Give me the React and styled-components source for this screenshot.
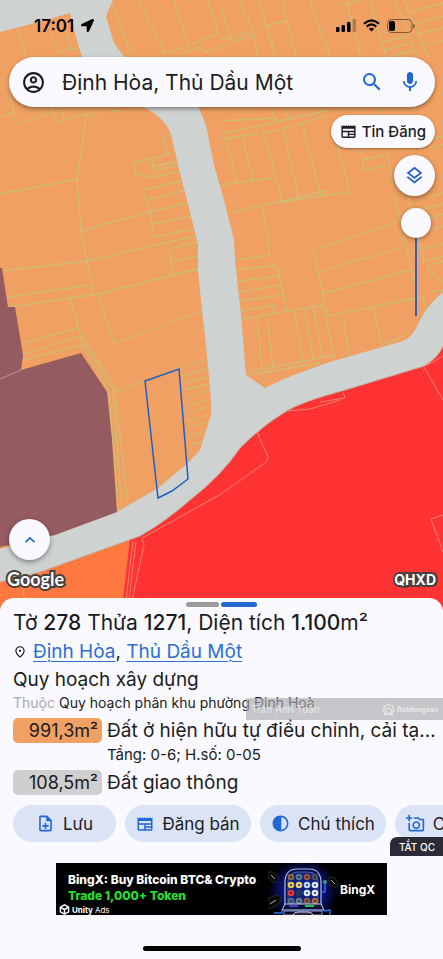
import React, { useState } from 'react';
import styled, { createGlobalStyle } from 'styled-components';
import { FaLocationArrow } from 'react-icons/fa';
import {
  MdContrast,
  MdKeyboardArrowUp,
  MdMic,
  MdOutlineAccountCircle,
  MdOutlineAddAPhoto,
  MdOutlineLayers,
  MdOutlineNewspaper,
  MdOutlineNoteAdd,
  MdOutlinePlace,
  MdSearch,
} from 'react-icons/md';

const GlobalStyle = createGlobalStyle`
  * {
    box-sizing: border-box;
  }
  body {
    margin: 0;
    background: #faf9ff;
    color: #1b1c22;
    font-family: Inter, 'Noto Sans', sans-serif;
  }
  button, input {
    font-family: inherit;
    color: inherit;
  }
`;

const Page = styled.div`
  display: flex;
  flex-direction: column;
  min-height: 100vh;
  overflow: hidden;
`;

const MapArea = styled.section`
  position: relative;
  display: flex;
  flex-direction: column;
  flex: 1;
  min-height: 560px;
  padding-bottom: 20px;
  background: #f0a062;
`;

const MapSvg = styled.svg`
  position: absolute;
  inset: 0;
  width: 100%;
  height: 100%;
`;

const StatusBar = styled.div`
  position: relative;
  display: flex;
  align-items: center;
  justify-content: space-between;
  height: 57px;
  padding: 0 28px 6px 34px;
  color: #000;
`;

const Clock = styled.div`
  display: flex;
  align-items: center;
  gap: 7px;
  font-size: 17px;
  font-weight: 600;
`;

const StatusIcons = styled.div`
  display: flex;
  align-items: center;
  gap: 7px;
`;

const SearchBar = styled.form`
  position: relative;
  display: flex;
  align-items: center;
  height: 50px;
  margin: 0 8px 0 9px;
  padding: 0 6px 0 11px;
  border-radius: 25px;
  background: #faf9ff;
  box-shadow: 0 2px 4px rgba(0, 0, 0, 0.4);
`;

const SearchInput = styled.input`
  flex: 1;
  min-width: 0;
  padding: 0 0 0 16px;
  border: 0;
  outline: 0;
  background: transparent;
  font-size: 21px;
`;

const IconButton = styled.button`
  display: flex;
  align-items: center;
  justify-content: center;
  width: ${({ $wide }) => ($wide ? '38px' : '26px')};
  height: 38px;
  padding: 0;
  border: 0;
  background: transparent;
  color: ${({ $blue }) => ($blue ? '#1f66d6' : '#1b1c22')};
`;

const MapTools = styled.div`
  position: relative;
  display: flex;
  flex-direction: column;
  align-items: flex-end;
  gap: 7px;
  padding: 8px 8px 0 0;
`;

const PostButton = styled.button`
  display: flex;
  align-items: center;
  gap: 5px;
  height: 33px;
  padding: 0 9px;
  border: 0;
  border-radius: 17px;
  background: #faf9ff;
  box-shadow: 0 1px 3px rgba(0, 0, 0, 0.4);
  font-size: 15px;
  font-weight: 500;
`;

const RoundButton = styled.button`
  display: flex;
  align-items: center;
  justify-content: center;
  width: 41px;
  height: 41px;
  padding: 0;
  border: 0;
  border-radius: 50%;
  background: #faf9ff;
  color: #1f5fc4;
  box-shadow: 0 2px 5px rgba(0, 0, 0, 0.4);
`;

const OpacitySlider = styled.input`
  appearance: none;
  writing-mode: vertical-lr;
  width: 30px;
  height: 108px;
  margin: 5px 4px 0 0;
  background: linear-gradient(#2f62bd, #2f62bd) center / 2px 100% no-repeat;

  &::-webkit-slider-thumb {
    appearance: none;
    width: 30px;
    height: 30px;
    border-radius: 50%;
    background: #faf9ff;
    box-shadow: 0 1px 4px rgba(0, 0, 0, 0.45);
  }
`;

const MapFooter = styled.div`
  position: relative;
  display: flex;
  flex-direction: column;
  gap: 8px;
  margin-top: auto;
  padding: 0 7px;
`;

const FooterRow = styled.div`
  display: flex;
  align-items: center;
  justify-content: space-between;
  height: 22px;
  color: #fff;
  paint-order: stroke fill;
  -webkit-text-stroke: 4px #45403e;
`;

const GoogleMark = styled.span`
  font-family: Lato, sans-serif;
  font-size: 18px;
  font-weight: 700;
`;

const MapMode = styled.span`
  font-size: 14px;
  font-weight: 700;
`;

const CollapseButton = styled(RoundButton)`
  margin-left: 2px;
`;

const Sheet = styled.main`
  position: relative;
  margin-top: -12px;
  padding-top: 4px;
  border-radius: 14px 14px 0 0;
  background: #faf9ff;
`;

const Handles = styled.div`
  display: flex;
  justify-content: center;
  gap: 2px;
  height: 7px;
`;

const Handle = styled.span`
  width: ${({ $active }) => ($active ? '36px' : '33px')};
  height: 5px;
  border-radius: 3px;
  background: ${({ $active }) => ($active ? '#2469cf' : '#9b9b9b')};
`;

const Info = styled.div`
  display: flex;
  flex-direction: column;
  padding: 0 0 0 13px;
`;

const Title = styled.h1`
  margin: 0;
  font-size: 21px;
  font-weight: 400;
  line-height: 28px;
  white-space: nowrap;

  b {
    font-weight: 500;
  }
`;

const Place = styled.p`
  display: flex;
  align-items: center;
  gap: 6px;
  margin: 0;
  font-size: 19px;
  line-height: 30px;

  a {
    color: #2b70d2;
    text-decoration-thickness: 1px;
    text-underline-offset: 3px;
  }
`;

const Heading = styled.h2`
  margin: 0;
  font-size: 19px;
  font-weight: 400;
  line-height: 26px;
`;

const Zoning = styled.p`
  margin: 0 0 5px;
  font-size: 14px;
  line-height: 20px;

  span {
    color: #a9a9b0;
  }
`;

const LandRow = styled.div`
  display: flex;
  align-items: center;
  gap: 5px;
  height: 25px;
  padding-right: 7px;
`;

const Area = styled.span`
  flex: none;
  width: 89px;
  padding-right: 4px;
  border-radius: 5px;
  background: ${({ $color }) => $color};
  font-size: 18px;
  line-height: 25px;
  text-align: right;
`;

const LandName = styled.span`
  overflow: hidden;
  font-size: 19px;
  line-height: 28px;
  text-overflow: ellipsis;
  white-space: nowrap;
`;

const LandNote = styled.p`
  margin: 0 0 3px 94px;
  font-size: 15px;
  line-height: 24px;
`;

const Chips = styled.div`
  display: flex;
  gap: 9px;
  margin-top: 10px;
  overflow: hidden;
`;

const Chip = styled.button`
  display: flex;
  flex: none;
  align-items: center;
  justify-content: center;
  gap: 8px;
  width: ${({ $small }) => ($small ? '103px' : '126px')};
  height: 37px;
  padding: 0;
  border: 0;
  border-radius: 19px;
  background: #dbe4f7;
  font-size: 17px;

  svg {
    color: #1f66d6;
  }
`;

const Watermark = styled.div`
  position: absolute;
  top: 100px;
  right: 0;
  display: flex;
  align-items: center;
  justify-content: space-between;
  width: 197px;
  height: 22px;
  padding: 0 5px;
  background: rgba(170, 170, 174, 0.65);
  color: #e8e8ea;
  font-size: 10px;
`;

const WatermarkBrand = styled.span`
  display: flex;
  align-items: center;
  gap: 2px;
  font-size: 7px;
  font-weight: 700;
`;

const AdBlock = styled.aside`
  position: relative;
  display: flex;
  justify-content: center;
  padding-top: 21px;
`;

const CloseAd = styled.button`
  position: absolute;
  top: -5px;
  right: 0;
  height: 19px;
  padding: 0 8px 0 9px;
  border: 0;
  border-radius: 7px 0 0 0;
  background: #2a2b34;
  color: #fff;
  font-size: 10px;
  font-weight: 500;
`;

const Ad = styled.a`
  display: flex;
  width: 331px;
  height: 52px;
  overflow: hidden;
  background: #000;
  color: #fff;
  text-decoration: none;
`;

const AdText = styled.div`
  display: flex;
  flex: none;
  flex-direction: column;
  width: 212px;
  padding: 9px 0 0 12px;
  font-size: 12px;
  font-weight: 800;
  line-height: 16px;
  white-space: nowrap;
`;

const AdGreen = styled.span`
  color: #22e02a;
`;

const AdNetwork = styled.span`
  display: flex;
  align-items: center;
  gap: 2px;
  margin-left: -9px;
  font-size: 8px;
  font-weight: 700;
  line-height: 8px;

  i {
    font-style: normal;
    font-weight: 400;
  }
`;

const AdArt = styled.svg`
  flex: none;
  width: 72px;
  height: 52px;
`;

const AdBrand = styled.span`
  align-self: center;
  font-size: 12px;
  font-weight: 700;
`;

const HomeIndicator = styled.div`
  width: 158px;
  height: 5px;
  margin: 31px auto 8px;
  border-radius: 3px;
  background: #000;
`;

// parcel borders on residential land
const parcels = [
  'M17 27 26 57M51 34 52 42 58 47 58 52 77 48M67 32 71 49M0 117 12 112 16 124 44 115 42 108M51 108 57 123 88 113M60 108 65 120M92 116 97 112 100 108M111 108 112 111 123 110',
  'M87 112 77 178 81 231 94 295M0 194 78 179M7 80 14 114M112 5 132 55M139 0 165 53M174 0 188 44M207 0 219 34M165 54 219 34M180 54 200 47 206 52 221 47',
  'M172 135 163 137 168 154M173 163 153 166 155 177M133 163 173 153M152 160 153 167 178 161M155 170 180 165M155 177 180 171M143 190 183 181M143 190 146 200 187 190M133 163 137 175 155 177',
  'M0 271 87 261M81 231 148 212 187 203M148 200 155 237 193 229M152 224 191 216M87 261 195 236M169 249 198 242M169 249 173 275 198 269M171 262 198 256M94 295 198 269M8 297 90 285M8 307 98 294',
  'M70 298 82 340 115 392 128 505M23 343 78 328M23 354 80 336M23 360 82 345M82 336 117 390M80 341 109 392 118 511M98 295 114 343 203 311M113 392 122 508M115 392 145 381',
  'M180 368 205 360M182 376 207 369M184 383 208 377M184 390 209 384M185 398 210 390M185 407 211 399M186 414 211 406M187 421 211 414M187 428 210 421M188 436 208 430M189 445 204 441',
  'M229 213 330 190M263 208 270 255 236 260M236 270 277 265 287 310M238 281 279 276M239 292 281 285M240 301 283 295M240 311 274 305 275 313M242 319 322 305 335 358M257 317 262 368M267 316 273 368M294 311 303 361M304 308 314 360M313 306 323 357M247 372 335 355M248 375 320 363',
  'M397 222 313 250 328 316 422 297 427 310M318 272 403 247M321 294 410 270M343 316 349 356M373 308 382 345 408 334M394 196 417 290M408 196 424 262 443 256M421 250 443 243M427 266 443 261M443 283 434 276 427 266M431 292 443 290',
  'M221 8 232 41M240 0 254 34 258 57M221 46 254 34M221 40 252 31M258 0 276 57M265 26 286 21M282 0 296 57M310 0 330 57M342 5 362 0M346 0 361 57M370 0 386 57M395 0 418 57M404 0 428 57M381 34 402 28M383 42 406 36M384 50 411 43M387 57 414 50M411 12 443 3M415 24 443 16M418 34 443 28M424 46 443 40',
  'M221 121 277 118M221 139 275 131 330 115M221 134 330 110M271 108 276 122M285 108 290 120M226 138 237 183M221 185 272 178M242 135 253 180M263 130 282 200M283 127 299 200M302 124 321 196 350 192 331 120M277 203 321 196M360 148 364 170 386 165M362 160 386 155M380 108 388 156 393 185M434 138 443 136M410 108 420 105M430 148 443 144M432 196 443 193M412 212 443 204M414 222 443 214M417 234 443 226',
];

const sensitive =
  'M257 432 268 457 266 462 221 494 142 538 144 545 132 600M133 541 126 600M136 541 129 600M288 411 310 409 340 400M443 515 431 519 443 552M424 367 443 400M343 392 345 398 320 402M426 366 443 356';

function PlanningMap() {
  return (
    <MapSvg viewBox="0 0 443 618" preserveAspectRatio="xMidYMin slice" aria-hidden="true">
      <rect width="443" height="618" fill="#f0a062" />
      <path d={parcels.join('')} fill="none" stroke="#cfbd72" strokeWidth="1.3" />
      {/* red zone and bright orange zone under the road */}
      <path d="M443 335 424 356 345 380 285 398 250 420 205 470 165 510 128 541 120 618 443 618Z" fill="#ff3333" />
      <path d="M0 575 60 560 130 538 121 618 0 618Z" fill="#ff7840" />
      <path d={sensitive} fill="none" stroke="#f08468" strokeWidth="1" />
      <path d="M22 587 25 600" stroke="#f0a062" />
      {/* roads */}
      <path
        d="M0 0H113L106 16 113 40Q118 52 140 72L182 90Q200 102 207 130L214 165 224 200 234 240 235 260 241 315 246 375 265 388Q288 376 330 362L403 341Q413 337 418 324 426 306 443 292V346Q438 358 424 366L345 390Q300 402 285 412 262 426 240 448 222 475 190 500 165 522 140 536L90 554 40 572 0 582V549L55 535 117 512 158 488 188 463 200 450 211 415V400L206 345 202 310 198 270V245L187 200 178 165 171 134Q164 117 145 108L100 90 82 57 74 30 70 13 35 23 0 32Z"
        fill="#ced2d0"
      />
      <path d="M0 582 40 572 90 554 140 536Q165 522 190 500 222 475 240 448 262 426 285 412 300 402 345 390L424 366Q438 358 443 346" fill="none" stroke="#bdb4a4" />
      {/* maroon land */}
      <path d="M0 268 2 268 8 307H15L23 355 21 370 81 353 107 392 112 440 117 512 55 535 0 547Z" fill="#945b60" />
      <path d="M0 379 21 370" stroke="#b79a91" />
      <path d="M145 381 179 369 188 479 172 491 158 498Z" fill="none" stroke="#1f5fc4" strokeWidth="1.5" />
    </MapSvg>
  );
}

function Signal() {
  return (
    <svg width="20" height="13" viewBox="0 0 20 13" aria-hidden="true">
      <rect x="0" y="8" width="3.5" height="5" rx="1" />
      <rect x="5.5" y="6" width="3.5" height="7" rx="1" />
      <rect x="11" y="3" width="3.5" height="10" rx="1" />
      <rect x="16.5" y="0" width="3.5" height="13" rx="1" opacity=".25" />
    </svg>
  );
}

function Wifi() {
  return (
    <svg width="17" height="13" viewBox="0 0 17 13" fill="none" stroke="#000" strokeWidth="2.2" aria-hidden="true">
      <path d="M1 4.7Q8.5-2 16 4.7M3.7 7.600Q8.5 3.2 13.3 7.6" />
      <path d="M8.5 12.5 5.8 9.7Q8.5 7.6 11.2 9.7Z" fill="#000" stroke="none" />
    </svg>
  );
}

function Battery() {
  return (
    <svg width="28" height="14" viewBox="0 0 28 14" aria-hidden="true">
      <rect x=".5" y=".5" width="24.5" height="13" rx="4" fill="none" stroke="#000" opacity=".45" />
      <rect x="2" y="2" width="6" height="10" rx="2" />
      <path d="M26.3 4.5Q28 5.5 28 7T26.3 9.5Z" opacity=".5" />
    </svg>
  );
}

function UnityLogo() {
  return (
    <svg width="11" height="11" viewBox="0 0 12 12" fill="none" stroke="#fff" strokeWidth="1.6" aria-hidden="true">
      <path d="M6 1 10.5 3.5V8.5L6 11 1.5 8.5V3.5ZM6 6V11M6 6 1.5 3.5M6 6 10.5 3.5" />
    </svg>
  );
}

const coins = ['#8b6242', '#4c7593', '#9c5130', '#455067', '#e1c650', '#e4d278', '#bcd5ff', '#dce8ff', '#e63a35', '#20366d', '#dcecff', '#e5e8f4', '#52687d', '#6c7c8c', '#8e583c', '#ad6640'];

function SlotMachine() {
  return (
    <AdArt viewBox="0 0 72 52" aria-hidden="true">
      <defs>
        <radialGradient id="glow">
          <stop offset="0" stopColor="#1734e8" />
          <stop offset=".55" stopColor="#0c1684" />
          <stop offset="1" stopColor="#000" />
        </radialGradient>
      </defs>
      <ellipse cx="35" cy="28" rx="35" ry="32" fill="url(#glow)" />
      <path d="M17 42V18Q18 6 29 6H41Q52 6 53 18V42Z" fill="#071046" stroke="#aebdea" strokeWidth="1.2" />
      <path d="M20 40V18Q21 9 30 9H40Q49 9 50 18V40Z" fill="#10207c" stroke="#6e83d0" strokeWidth=".7" />
      {coins.map((color, i) => (
        <g key={i}>
          <circle cx={23 + (i % 4) * 8} cy={14 + Math.floor(i / 4) * 8} r="3.3" fill={color} />
          <circle cx={23 + (i % 4) * 8} cy={14 + Math.floor(i / 4) * 8} r="1" fill="#182a5f" />
        </g>
      ))}
      <path d="M17 41H53L56 47H14Z" fill="#0a1238" stroke="#c5ceec" />
      <path d="M37 43H46" stroke="#27c746" strokeWidth="2" />
      <path d="M21 43H30" stroke="#5034cf" strokeWidth="2" />
      <path d="M16 48H54V52H16Z" fill="#07091b" stroke="#8294d7" />
      <path d="M25 52Q26 49 30 49H40Q44 49 45 52" fill="#29263a" stroke="#c5ceec" />
      <path d="M54 29H57V20M6 50H14V47M56 48 62 47V52" fill="none" stroke="#286fe8" strokeWidth="1.5" />
      <circle cx="57" cy="19" r="2" fill="#449a84" />
      <g fill="#090909" stroke="#262626">
        <ellipse cx="5" cy="14" rx="6" ry="4" transform="rotate(48 5 14)" />
        <ellipse cx="5" cy="39" rx="9" ry="5" transform="rotate(-35 5 39)" />
        <ellipse cx="65" cy="19" rx="6" ry="4" transform="rotate(50 65 19)" />
      </g>
      <path d="M3 12 7 16M2 41 8 37M63 17 67 21" stroke="#aaa" />
    </AdArt>
  );
}

function App() {
  const [query, setQuery] = useState('Định Hòa, Thủ Dầu Một');
  const [opacity, setOpacity] = useState(0);

  return (
    <Page>
      <GlobalStyle />
      <MapArea>
        <PlanningMap />
        <StatusBar>
          <Clock>
            17:01
            <FaLocationArrow size={13} />
          </Clock>
          <StatusIcons>
            <Signal />
            <Wifi />
            <Battery />
          </StatusIcons>
        </StatusBar>

        <SearchBar onSubmit={(e) => e.preventDefault()}>
          <IconButton type="button" aria-label="Tài khoản">
            <MdOutlineAccountCircle size={25} />
          </IconButton>
          <SearchInput aria-label="Tìm kiếm" value={query} onChange={(e) => setQuery(e.target.value)} />
          <IconButton $blue $wide type="submit" aria-label="Tìm">
            <MdSearch size={24} />
          </IconButton>
          <IconButton $blue $wide type="button" aria-label="Giọng nói">
            <MdMic size={24} />
          </IconButton>
        </SearchBar>

        <MapTools>
          <PostButton type="button">
            <MdOutlineNewspaper size={17} />
            Tin Đăng
          </PostButton>
          <RoundButton type="button" aria-label="Lớp bản đồ">
            <MdOutlineLayers size={21} />
          </RoundButton>
          <OpacitySlider
            type="range"
            aria-label="Độ mờ"
            value={opacity}
            onChange={(e) => setOpacity(Number(e.target.value))}
          />
        </MapTools>

        <MapFooter>
          <CollapseButton type="button" aria-label="Mở rộng">
            <MdKeyboardArrowUp size={20} />
          </CollapseButton>
          <FooterRow>
            <GoogleMark>Google</GoogleMark>
            <MapMode>QHXD</MapMode>
          </FooterRow>
        </MapFooter>
      </MapArea>

      <Sheet>
        <Handles>
          <Handle />
          <Handle $active />
        </Handles>
        <Info>
          <Title>
            Tờ <b>278</b> Thửa <b>1271</b>, Diện tích <b>1.100</b>m²
          </Title>
          <Place>
            <MdOutlinePlace size={14} />
            <span>
              <a href="#dinh-hoa">Định Hòa</a>, <a href="#thu-dau-mot">Thủ Dầu Một</a>
            </span>
          </Place>
          <Heading>Quy hoạch xây dựng</Heading>
          <Zoning>
            <span>Thuộc</span> Quy hoạch phân khu phường Định Hoà
          </Zoning>
          <LandRow>
            <Area $color="#f0a062">991,3m²</Area>
            <LandName>Đất ở hiện hữu tự điều chỉnh, cải tạo chỉnh trang</LandName>
          </LandRow>
          <LandNote>Tầng: 0-6; H.số: 0-05</LandNote>
          <LandRow>
            <Area $color="#cfcfcf">108,5m²</Area>
            <LandName>Đất giao thông</LandName>
          </LandRow>
          <Chips>
            <Chip $small type="button">
              <MdOutlineNoteAdd size={19} />
              Lưu
            </Chip>
            <Chip type="button">
              <MdOutlineNewspaper size={18} />
              Đăng bán
            </Chip>
            <Chip type="button">
              <MdContrast size={19} />
              Chú thích
            </Chip>
            <Chip type="button">
              <MdOutlineAddAPhoto size={19} />
              Chụp ảnh
            </Chip>
          </Chips>
        </Info>
        <Watermark>
          Trần Anh Tuấn
          <WatermarkBrand>
            <svg width="13" height="13" viewBox="0 0 14 14" fill="none" stroke="#e8e8ea" strokeWidth="1.2" aria-hidden="true">
              <path d="M7 1 9 3 12 3 11 6 13 8 11 10V13L7 12 3 13V10L1 8 3 6 2 3 5 3ZM4 8 7 5 10 8V11H4Z" />
            </svg>
            Batdongsan
          </WatermarkBrand>
        </Watermark>
        <AdBlock>
          <CloseAd type="button">TẮT QC</CloseAd>
          <Ad href="#bingx">
            <AdText>
              BingX: Buy Bitcoin BTC&amp; Crypto
              <AdGreen>Trade 1,000+ Token</AdGreen>
              <AdNetwork>
                <UnityLogo />
                Unity <i>Ads</i>
              </AdNetwork>
            </AdText>
            <SlotMachine />
            <AdBrand>BingX</AdBrand>
          </Ad>
        </AdBlock>
        <HomeIndicator />
      </Sheet>
    </Page>
  );
}

export default App;
